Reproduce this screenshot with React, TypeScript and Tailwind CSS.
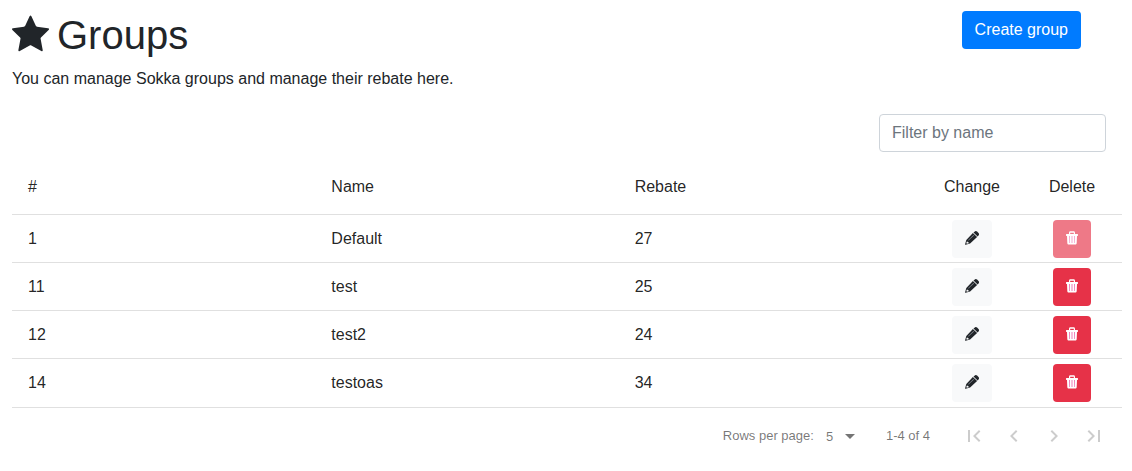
import { useState } from "react";

type Group = { id: number; name: string; rebate: number; locked?: boolean };

const groups: Group[] = [
  { id: 1, name: "Default", rebate: 27, locked: true },
  { id: 11, name: "test", rebate: 25 },
  { id: 12, name: "test2", rebate: 24 },
  { id: 14, name: "testoas", rebate: 34 },
];

function StarIcon() {
  return (
    <svg
      width="38"
      height="38"
      viewBox="0 0 38 38"
      fill="currentColor"
      aria-hidden="true"
      className="mb-0.5"
    >
      <path d="M17.6 1.300c.5-1 1.300-1 1.800 0l4.400 9.500c.2.5.6.8 1.200.9l11 1.500c1.200.2 1.400.9.6 1.700l-7.600 7.500c-.4.400-.5.800-.4 1.400l2.100 11.100c.2 1.200-.4 1.600-1.400 1.100l-10-5.500c-.5-.3-1.100-.3-1.600 0l-9.900 5.500c-1 .5-1.600.1-1.400-1.100l2.100-11.100c.1-.6 0-1-.4-1.400L.4 14.900c-.8-.8-.6-1.500.6-1.700l11-1.500c.6-.1 1-.4 1.200-.9z" />
    </svg>
  );
}

function PencilIcon() {
  return (
    <svg width="16" height="16" viewBox="0 1 16 16" fill="currentColor" aria-hidden="true">
      <path d="M10.500 1.700c.8-.8 1.800-.8 2.600-.1l1.400 1.400c.7.800.7 1.700 0 2.500l-.9.900-4.100-3.900z" />
      <path
        fillRule="evenodd"
        d="M8.900 3.100l4.200 3.900-7 6.600-4.400 1.200c-.5.100-.7-.1-.6-.6l1.200-4.300zM2.900 11.400l-.6 1.700.6.600 1.900-.5-.300-1-.9-.1-.1-.7z"
      />
      <path d="M9.500 5l.5.400-5.500 5.200-.5-.4z" fill="#8d9299" />
    </svg>
  );
}

function TrashIcon() {
  return (
    <svg width="16" height="16" viewBox="0 1 16 16" fill="currentColor" aria-hidden="true">
      <path
        fillRule="evenodd"
        d="M5 4v-1C5 1.900 5.500 1.300 6.400 1.300h3.200c.9 0 1.400.6 1.400 1.700v1h2.400c.4 0 .6.200.6.500v1c0 .300-.2.500-.6.500H13l-.3 7c-.1 1-.6 1.500-1.500 1.500H4.800c-.9 0-1.400-.5-1.500-1.500L3 6h-.4c-.4 0-.6-.2-.6-.5v-1c0-.3.2-.5.6-.5zM6.200 4h3.600V2.700H6.200z"
      />
      <path d="M5 6h1v7H5.200zM7.500 6h1v7h-1zM10 6h1l-.2 7H10z" fill="#f07fb8" />
    </svg>
  );
}

const pageButtons = [
  { label: "First page", d: "M18.410 16.590L13.820 12l4.590-4.590L17 6l-6 6 6 6zM6 6h2v12H6z" },
  { label: "Previous page", d: "M15.410 7.410L14 6l-6 6 6 6 1.410-1.410L10.830 12z" },
  { label: "Next page", d: "M10 6L8.590 7.410 13.170 12l-4.580 4.590L10 18l6-6z" },
  { label: "Last page", d: "M5.590 7.410L10.180 12l-4.590 4.590L7 18l6-6-6-6zM16 6h2v12h-2z" },
];

export default function App() {
  const [filter, setFilter] = useState("");
  const rows = groups.filter((g) => g.name.toLowerCase().includes(filter.toLowerCase()));

  return (
    <main className="bg-white pt-[11px] pr-[10px] pl-3 font-['Liberation_Sans',Arial,sans-serif] text-base text-[#212529]">
      <header className="flex items-start justify-between pr-[41px]">
        <h1 className="flex items-center gap-[7px] text-[40px] leading-12">
          <StarIcon />
          Groups
        </h1>
        <button type="button" className="h-[38px] rounded bg-[#007bff] px-[13px] text-white">
          Create group
        </button>
      </header>
      <p className="mt-2">You can manage Sokka groups and manage their rebate here.</p>

      <div className="mt-[23px] flex justify-end pr-4">
        <input
          type="text"
          aria-label="Filter by name"
          placeholder="Filter by name"
          value={filter}
          onChange={(e) => setFilter(e.target.value)}
          className="h-[38px] w-[227px] rounded border border-[#ced4da] px-3 outline-none placeholder:text-[#6c757d]"
        />
      </div>

      <table className="mt-[6px] w-full table-fixed border-collapse text-left text-black/87">
        <thead>
          <tr className="h-14 border-b border-[#e0e0e0]">
            <th className="px-4 pt-0.5 font-normal">#</th>
            <th className="px-4 pt-0.5 font-normal">Name</th>
            <th className="px-4 pt-0.5 font-normal">Rebate</th>
            <th className="w-[100px] pt-0.5 text-center font-normal">Change</th>
            <th className="w-[100px] pt-0.5 text-center font-normal">Delete</th>
          </tr>
        </thead>
        <tbody>
          {rows.map((g) => (
            <tr key={g.id} className="h-12 border-b border-[#e0e0e0] last:border-b-0">
              <td className="px-4 pt-0.5">{g.id}</td>
              <td className="px-4 pt-0.5">{g.name}</td>
              <td className="px-4 pt-0.5">{g.rebate}</td>
              <td className="pt-0.5">
                <button
                  type="button"
                  aria-label={`Change ${g.name}`}
                  className="mx-auto flex h-[38px] w-10 items-center justify-center rounded bg-[#f8f9fa] text-[#212529]"
                >
                  <PencilIcon />
                </button>
              </td>
              <td className="pt-0.5">
                <button
                  type="button"
                  aria-label={`Delete ${g.name}`}
                  disabled={g.locked}
                  className="mx-auto flex h-[38px] w-[38px] items-center justify-center rounded bg-[#e63248] text-white disabled:opacity-65"
                >
                  <TrashIcon />
                </button>
              </td>
            </tr>
          ))}
        </tbody>
      </table>

      <footer className="mt-px flex h-[57px] items-center justify-end border-t border-[#e0e0e0] pr-2 text-[13px] text-black/54">
        <label htmlFor="rows-per-page">Rows per page:</label>
        <div className="ml-3 grid items-center">
          <select
            id="rows-per-page"
            defaultValue="5"
            className="col-start-1 row-start-1 w-9 appearance-none bg-transparent pt-0.5 outline-none"
          >
            <option>5</option>
            <option>10</option>
            <option>25</option>
          </select>
          <svg
            width="24"
            height="24"
            viewBox="0 0 24 24"
            fill="currentColor"
            aria-hidden="true"
            className="pointer-events-none col-start-1 row-start-1 justify-self-end"
          >
            <path d="M7 10l5 5 5-5z" />
          </svg>
        </div>
        <span className="mr-6 ml-6">1-4 of 4</span>
        <nav aria-label="Pagination" className="flex">
          {pageButtons.map((b) => (
            <button
              key={b.label}
              type="button"
              aria-label={b.label}
              disabled
              className="flex h-10 w-10 items-center justify-center text-black/20"
            >
              <svg width="24" height="24" viewBox="0 0 24 24" fill="currentColor" aria-hidden="true">
                <path d={b.d} />
              </svg>
            </button>
          ))}
        </nav>
      </footer>
    </main>
  );
}
